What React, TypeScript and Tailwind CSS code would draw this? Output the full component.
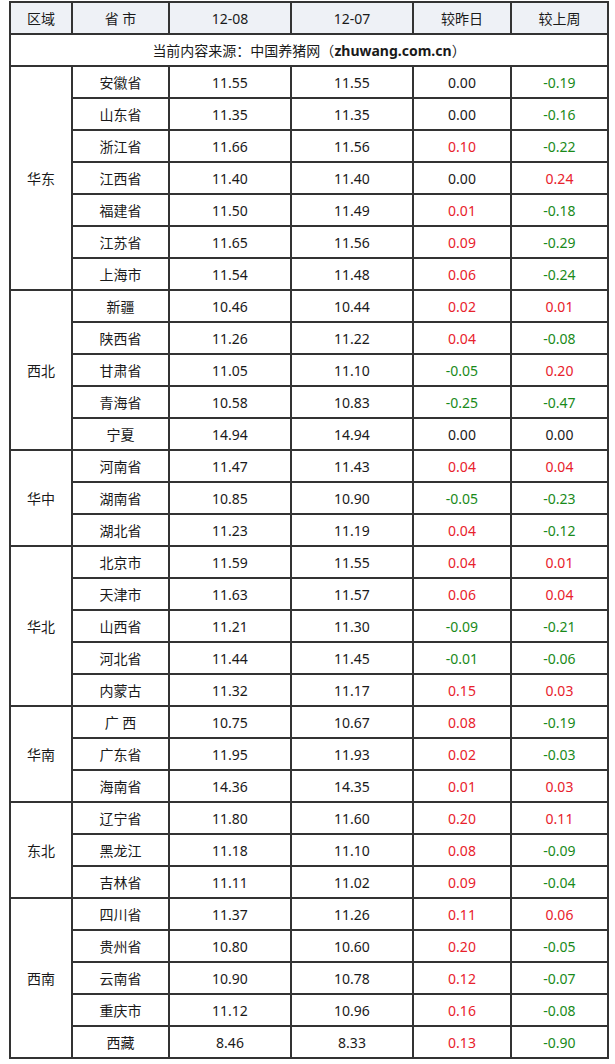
const groups: { region: string; rows: [string, string, string, string, string][] }[] = [
  {
    region: '华东',
    rows: [
      ['安徽省', '11.55', '11.55', '0.00', '-0.19'],
      ['山东省', '11.35', '11.35', '0.00', '-0.16'],
      ['浙江省', '11.66', '11.56', '0.10', '-0.22'],
      ['江西省', '11.40', '11.40', '0.00', '0.24'],
      ['福建省', '11.50', '11.49', '0.01', '-0.18'],
      ['江苏省', '11.65', '11.56', '0.09', '-0.29'],
      ['上海市', '11.54', '11.48', '0.06', '-0.24'],
    ],
  },
  {
    region: '西北',
    rows: [
      ['新疆', '10.46', '10.44', '0.02', '0.01'],
      ['陕西省', '11.26', '11.22', '0.04', '-0.08'],
      ['甘肃省', '11.05', '11.10', '-0.05', '0.20'],
      ['青海省', '10.58', '10.83', '-0.25', '-0.47'],
      ['宁夏', '14.94', '14.94', '0.00', '0.00'],
    ],
  },
  {
    region: '华中',
    rows: [
      ['河南省', '11.47', '11.43', '0.04', '0.04'],
      ['湖南省', '10.85', '10.90', '-0.05', '-0.23'],
      ['湖北省', '11.23', '11.19', '0.04', '-0.12'],
    ],
  },
  {
    region: '华北',
    rows: [
      ['北京市', '11.59', '11.55', '0.04', '0.01'],
      ['天津市', '11.63', '11.57', '0.06', '0.04'],
      ['山西省', '11.21', '11.30', '-0.09', '-0.21'],
      ['河北省', '11.44', '11.45', '-0.01', '-0.06'],
      ['内蒙古', '11.32', '11.17', '0.15', '0.03'],
    ],
  },
  {
    region: '华南',
    rows: [
      ['广 西', '10.75', '10.67', '0.08', '-0.19'],
      ['广东省', '11.95', '11.93', '0.02', '-0.03'],
      ['海南省', '14.36', '14.35', '0.01', '0.03'],
    ],
  },
  {
    region: '东北',
    rows: [
      ['辽宁省', '11.80', '11.60', '0.20', '0.11'],
      ['黑龙江', '11.18', '11.10', '0.08', '-0.09'],
      ['吉林省', '11.11', '11.02', '0.09', '-0.04'],
    ],
  },
  {
    region: '西南',
    rows: [
      ['四川省', '11.37', '11.26', '0.11', '0.06'],
      ['贵州省', '10.80', '10.60', '0.20', '-0.05'],
      ['云南省', '10.90', '10.78', '0.12', '-0.07'],
      ['重庆市', '11.12', '10.96', '0.16', '-0.08'],
      ['西藏', '8.46', '8.33', '0.13', '-0.90'],
    ],
  },
];

// colour by sign of the change
const changeColor = (v: string) => {
  if (v.startsWith('-')) return 'text-[#1a8a1a]';
  if (parseFloat(v) > 0) return 'text-[#e8222c]';
  return 'text-[#1a1a1a]';
};

const cell = 'border-2 border-[#333] h-[32px] p-0 text-center align-middle';

export default function App() {
  return (
    <div
      className="bg-white w-[615px] h-[1064px] pt-[1px] pl-[9px] text-[14px] text-[#1a1a1a]"
      style={{ fontFamily: '"Noto Sans", "Noto Sans CJK SC", sans-serif' }}
    >
      <table className="border-collapse table-fixed w-[598px]">
        <colgroup>
          <col className="w-[62px]" />
          <col className="w-[97px]" />
          <col className="w-[122px]" />
          <col className="w-[122px]" />
          <col className="w-[98px]" />
          <col className="w-[97px]" />
        </colgroup>
        <thead>
          <tr className="bg-[#eef1f6]">
            <th className={`${cell} font-normal`}>区域</th>
            <th className={`${cell} font-normal`}>省 市</th>
            <th className={`${cell} font-normal`}>12-08</th>
            <th className={`${cell} font-normal`}>12-07</th>
            <th className={`${cell} font-normal`}>较昨日</th>
            <th className={`${cell} font-normal`}>较上周</th>
          </tr>
        </thead>
        <tbody>
          <tr>
            <td colSpan={6} className={cell}>
              当前内容来源：中国养猪网（<span className="font-bold">zhuwang.com.cn</span>）
            </td>
          </tr>
          {groups.map((g) =>
            g.rows.map((r, i) => (
              <tr key={g.region + r[0]}>
                {i === 0 && (
                  <td rowSpan={g.rows.length} className={cell}>
                    {g.region}
                  </td>
                )}
                <td className={cell}>{r[0]}</td>
                <td className={cell}>{r[1]}</td>
                <td className={cell}>{r[2]}</td>
                <td className={`${cell} ${changeColor(r[3])}`}>{r[3]}</td>
                <td className={`${cell} ${changeColor(r[4])}`}>{r[4]}</td>
              </tr>
            ))
          )}
        </tbody>
      </table>
    </div>
  );
}
